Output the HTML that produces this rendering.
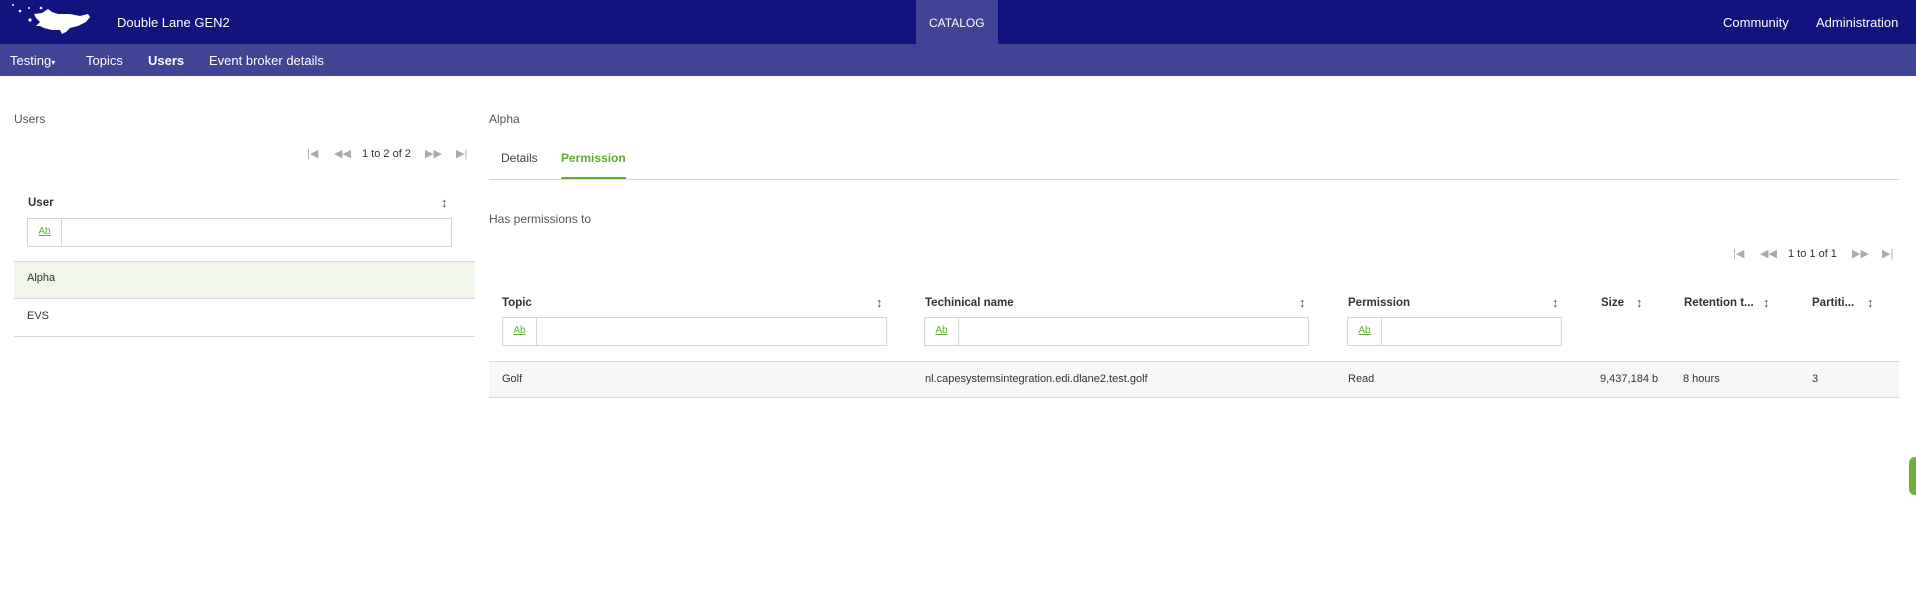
<!DOCTYPE html>
<html><head><meta charset="utf-8"><style>
*{box-sizing:border-box;margin:0;padding:0}
body{width:1916px;height:609px;background:#fff;font-family:"Liberation Sans",sans-serif;color:#333;position:relative;overflow:hidden;font-size:12px}
.a{position:absolute;white-space:nowrap}
.hdr{position:absolute;left:0;top:0;width:1916px;height:44px;background:#11137e}
.sub{position:absolute;left:0;top:44px;width:1916px;height:32px;background:#414394}
.w{color:#fff}
.pg{color:#aaa;font-size:11px}
.box{position:absolute;height:29px;border:1px solid #d6d6d6;background:#fff}
.box span{position:absolute;left:0;top:0;width:34px;height:27px;border-right:1px solid #d6d6d6;color:#5fae2e;text-decoration:underline;font-size:10px;text-align:center;line-height:25px}
.hd{font-weight:bold;font-size:11.5px;color:#333}
.srt{color:#555;font-size:13px;font-weight:bold}
.ln{position:absolute;height:1px;background:#d9d9d9}
</style></head><body>
<div class="hdr"></div>
<svg class="a" style="left:0;top:0" width="100" height="44" viewBox="0 0 100 44">
<g fill="#fff"><circle cx="13" cy="5" r="1"/><circle cx="20" cy="11" r="1.3"/><circle cx="29" cy="8" r="1"/><circle cx="41" cy="8" r="1.3"/><circle cx="30" cy="20" r="1.6"/>
<path d="M34 14 L42 13 L48 9 L52 12 L58 14 L70 14 L80 16 L88 14 L90 17 L86 22 L82 24 L78 26 L70 28 L66 32 L62 34 L60 30 L52 30 L44 28 L40 26 L36 26 L40 22 L36 18 Z"/></g></svg>
<div class="a w" style="left:117px;top:15px;font-size:13px">Double Lane GEN2</div>
<div class="a" style="left:916px;top:0;width:82px;height:44px;background:#414394"></div>
<div class="a w" style="left:929px;top:16px;font-size:12px">CATALOG</div>
<div class="a w" style="left:1723px;top:15px;font-size:13px">Community</div>
<div class="a w" style="left:1816px;top:15px;font-size:13px">Administration</div>
<div class="sub"></div>
<div class="a w" style="left:10px;top:53px;font-size:13px">Testing<span style="font-size:8px">▾</span></div>
<div class="a w" style="left:86px;top:53px;font-size:13px">Topics</div>
<div class="a w" style="left:148px;top:53px;font-size:13px;font-weight:bold">Users</div>
<div class="a w" style="left:209px;top:53px;font-size:13px">Event broker details</div>

<div class="a" style="left:14px;top:112px;font-size:12px;color:#555">Users</div>
<div class="a pg" style="left:307px;top:147px">|◀</div>
<div class="a pg" style="left:334px;top:147px">◀◀</div>
<div class="a" style="left:362px;top:148px;font-size:11px;color:#333">1 to 2 of 2</div>
<div class="a pg" style="left:425px;top:147px">▶▶</div>
<div class="a pg" style="left:456px;top:147px">▶|</div>
<div class="a hd" style="left:28px;top:197px">User</div>
<div class="a srt" style="left:441px;top:195px">↕</div>
<div class="box" style="left:27px;top:218px;width:425px"><span>Ab</span></div>
<div class="a" style="left:14px;top:261px;width:461px;height:37px;background:#f0f7ea;border-top:1px solid #d9d9d9"></div>
<div class="ln" style="left:14px;top:298px;width:461px"></div>
<div class="ln" style="left:14px;top:336px;width:461px"></div>
<div class="a" style="left:27px;top:272px;font-size:11px">Alpha</div>
<div class="a" style="left:27px;top:310px;font-size:11px">EVS</div>

<div class="a" style="left:489px;top:112px;font-size:12px;color:#555">Alpha</div>
<div class="a" style="left:501px;top:151px;font-size:12px;color:#444">Details</div>
<div class="a" style="left:561px;top:151px;font-size:12px;color:#5fae2e;font-weight:bold">Permission</div>
<div class="a" style="left:561px;top:177px;width:65px;height:2px;background:#5fae2e"></div>
<div class="ln" style="left:489px;top:179px;width:1410px"></div>
<div class="a" style="left:489px;top:212px;font-size:12px;color:#555">Has permissions to</div>
<div class="a pg" style="left:1733px;top:247px">|◀</div>
<div class="a pg" style="left:1760px;top:247px">◀◀</div>
<div class="a" style="left:1788px;top:248px;font-size:11px;color:#333">1 to 1 of 1</div>
<div class="a pg" style="left:1852px;top:247px">▶▶</div>
<div class="a pg" style="left:1882px;top:247px">▶|</div>

<div class="a hd" style="left:502px;top:297px">Topic</div><div class="a srt" style="left:876px;top:295px">↕</div>
<div class="a hd" style="left:925px;top:297px">Techinical name</div><div class="a srt" style="left:1299px;top:295px">↕</div>
<div class="a hd" style="left:1348px;top:297px">Permission</div><div class="a srt" style="left:1552px;top:295px">↕</div>
<div class="a hd" style="left:1601px;top:297px">Size</div><div class="a srt" style="left:1636px;top:295px">↕</div>
<div class="a hd" style="left:1684px;top:297px">Retention t...</div><div class="a srt" style="left:1763px;top:295px">↕</div>
<div class="a hd" style="left:1812px;top:297px">Partiti...</div><div class="a srt" style="left:1867px;top:295px">↕</div>
<div class="box" style="left:502px;top:317px;width:385px"><span>Ab</span></div>
<div class="box" style="left:924px;top:317px;width:385px"><span>Ab</span></div>
<div class="box" style="left:1347px;top:317px;width:215px"><span>Ab</span></div>
<div class="a" style="left:489px;top:361px;width:1410px;height:37px;background:#f7f7f7;border-top:1px solid #d9d9d9;border-bottom:1px solid #d9d9d9"></div>
<div class="a" style="left:502px;top:373px;font-size:11px">Golf</div>
<div class="a" style="left:925px;top:373px;font-size:11px">nl.capesystemsintegration.edi.dlane2.test.golf</div>
<div class="a" style="left:1348px;top:373px;font-size:11px">Read</div>
<div class="a" style="left:1600px;top:373px;font-size:11px">9,437,184 b</div>
<div class="a" style="left:1683px;top:373px;font-size:11px">8 hours</div>
<div class="a" style="left:1812px;top:373px;font-size:11px">3</div>
<div class="a" style="left:1909px;top:457px;width:12px;height:38px;background:#6ab23a;border-radius:6px"></div>
</body></html>
